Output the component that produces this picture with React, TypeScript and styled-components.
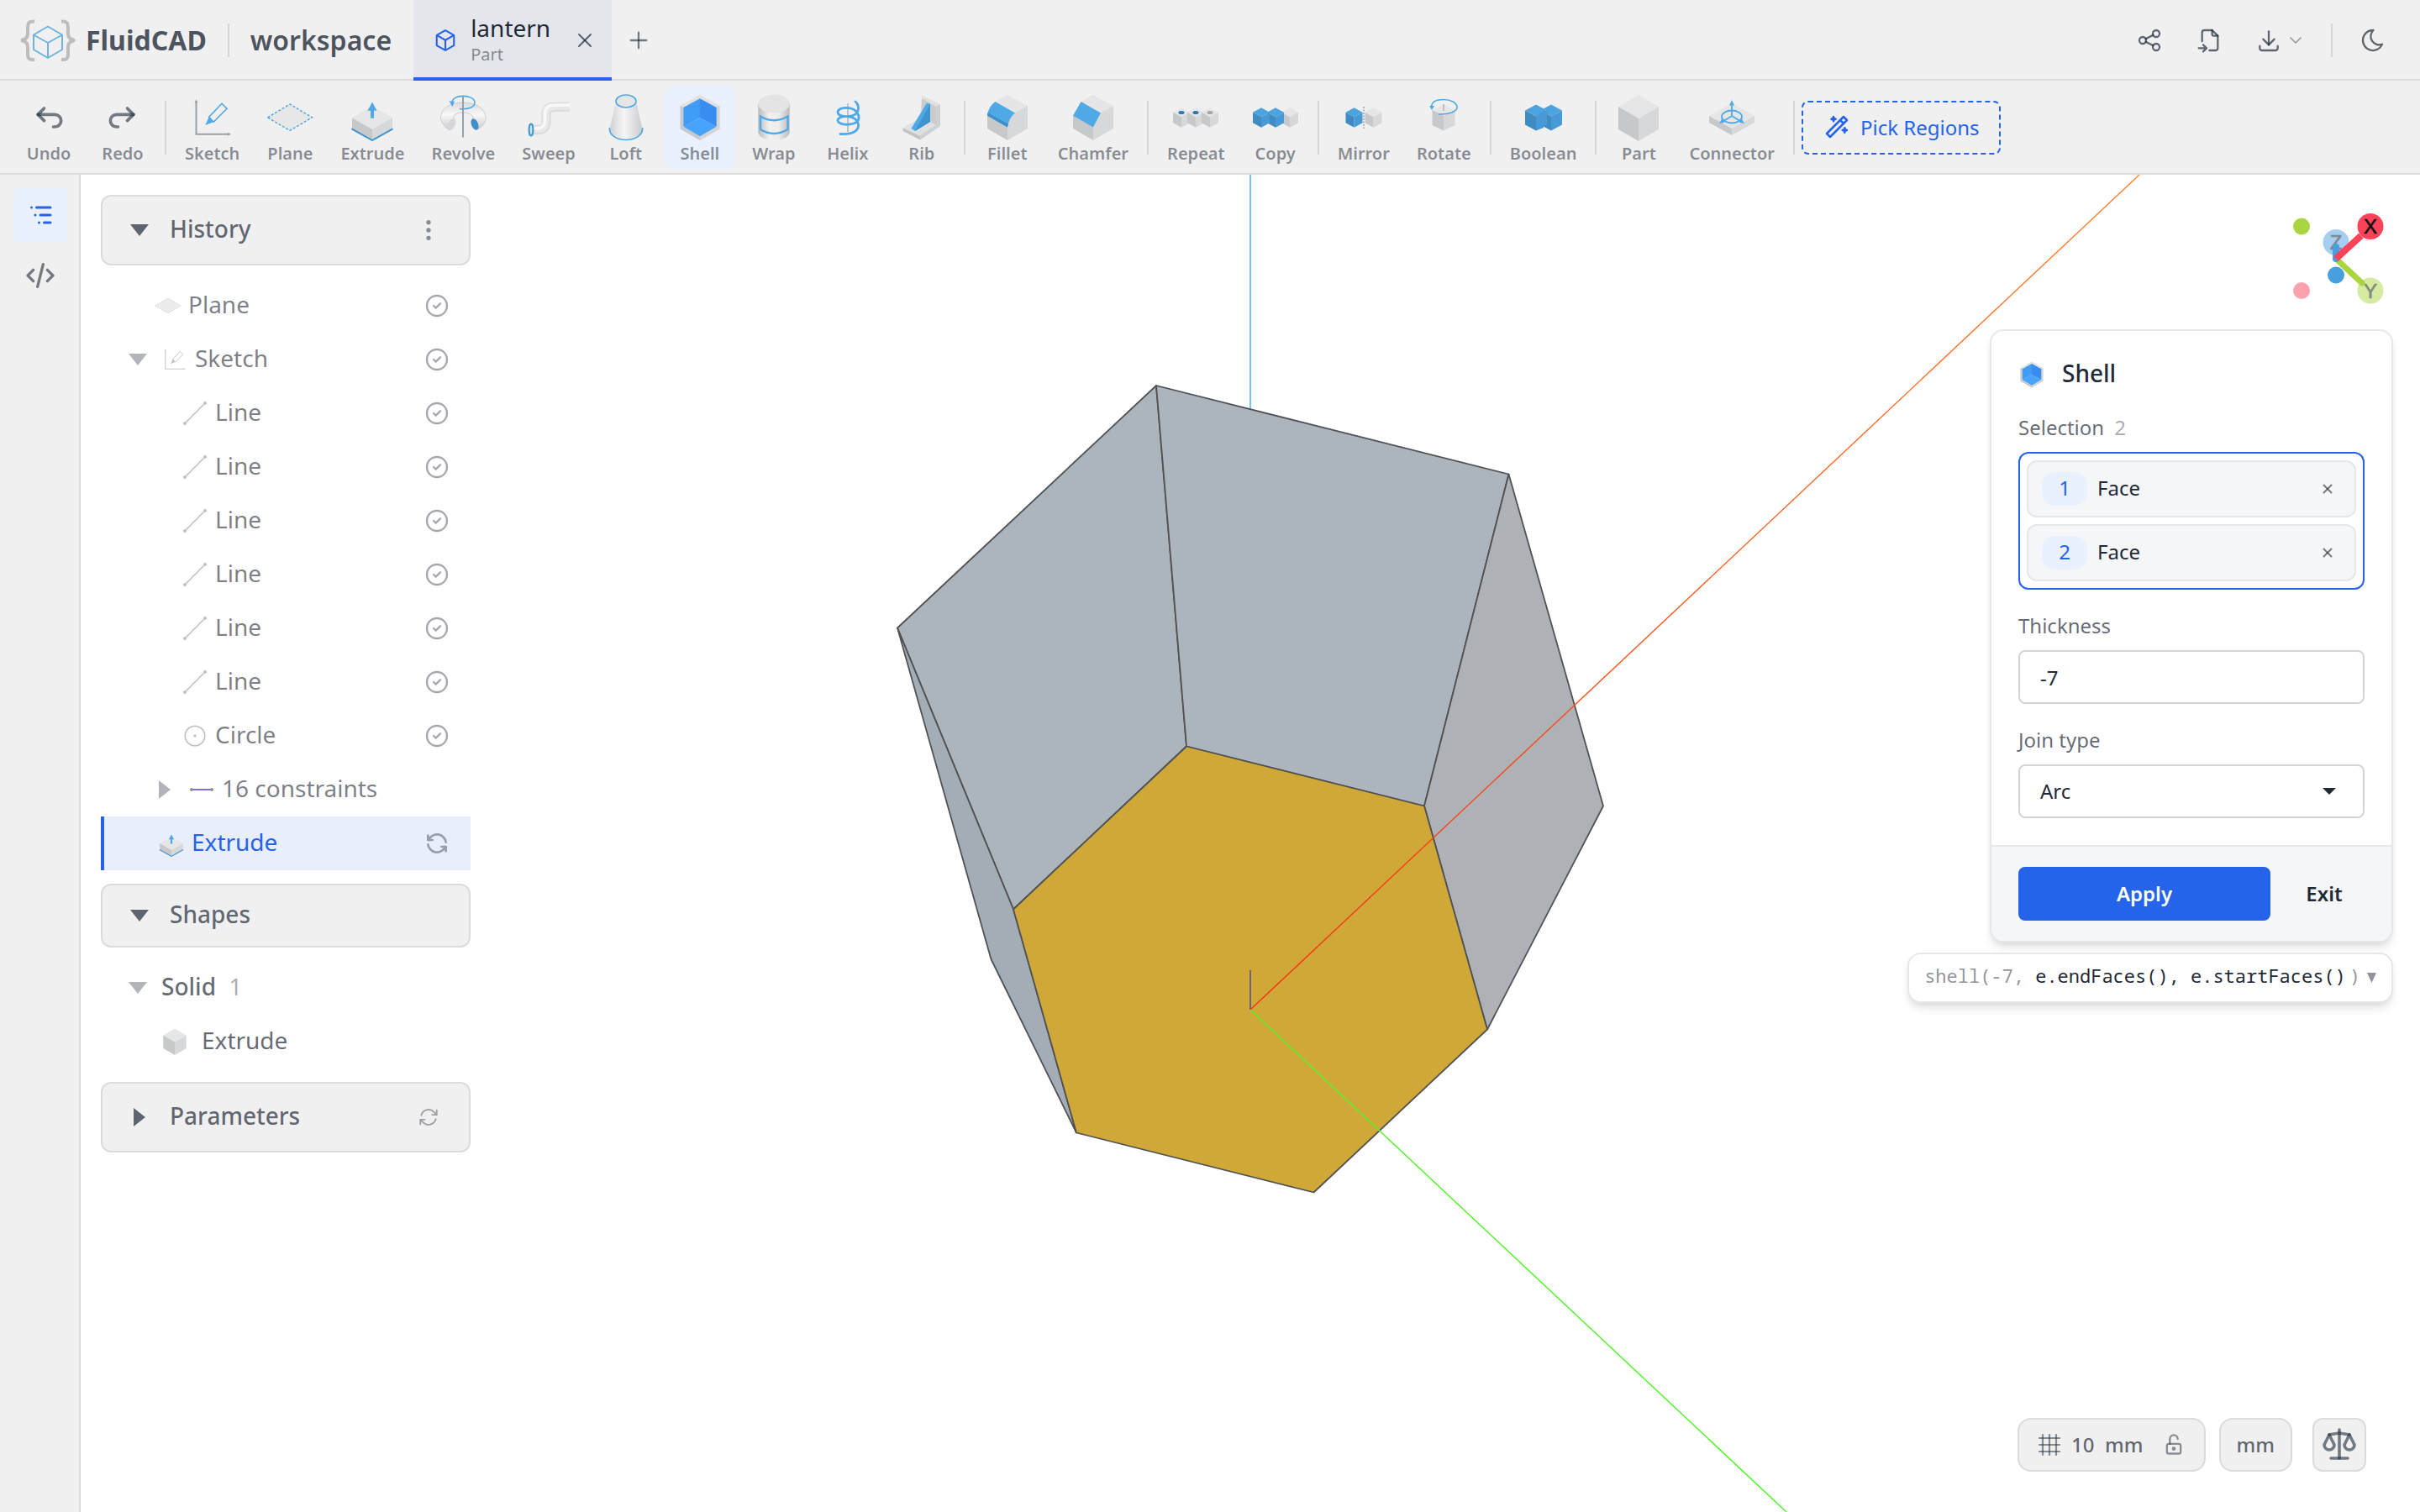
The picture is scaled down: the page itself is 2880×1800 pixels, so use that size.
import React from 'react';
import styled, { createGlobalStyle } from 'styled-components';
import {
  TbArrowBackUp,
  TbArrowForwardUp,
  TbChevronDown,
  TbCircleCheck,
  TbCode,
  TbDotsVertical,
  TbDownload,
  TbFileImport,
  TbListTree,
  TbLockOpen,
  TbMoon,
  TbPlus,
  TbRefresh,
  TbScale,
  TbShare,
  TbWand,
  TbX,
} from 'react-icons/tb';

const color = {
  chrome: '#f0f0f0',
  line: '#dbdbdb',
  accent: '#2563eb',
  accentSoft: '#e9f0fe',
  ink: '#1f2937',
  strong: 'rgba(31, 41, 55, 0.8)',
  medium: 'rgba(31, 41, 55, 0.7)',
  soft: 'rgba(31, 41, 55, 0.6)',
  faint: 'rgba(31, 41, 55, 0.5)',
  ghost: 'rgba(31, 41, 55, 0.4)',
  panelLine: '#e5e7eb',
  panelSoft: '#f5f6f8',
  steel: '#9aa0a9',
  blue: '#4fa9e6',
};

const GlobalStyle = createGlobalStyle`
  *, *::before, *::after { box-sizing: border-box; }
  body {
    margin: 0;
    background: #fff;
    color: ${color.ink};
    font-family: 'Noto Sans', 'Open Sans', sans-serif;
    font-size: 24px;
  }
  button, input, select { font: inherit; color: inherit; margin: 0; }
  button { padding: 0; border: 0; background: none; cursor: pointer; }
  svg { display: block; flex: none; }
`;

/* ---------- shell of the page ---------- */

const Page = styled.div`
  display: flex;
  flex-direction: column;
  min-height: 100vh;
`;

const Header = styled.header`
  display: flex;
  align-items: stretch;
  height: 96px;
  padding: 0 24px;
  background: ${color.chrome};
  box-shadow: inset 0 -2px ${color.line};
`;

const Group = styled.div<{ $gap: number }>`
  display: flex;
  align-items: center;
  gap: ${(p) => p.$gap}px;
`;

const Brand = styled.h1`
  margin: 0;
  font-size: 32px;
  font-weight: 700;
  line-height: 48px;
  color: ${color.strong};
`;

const Workspace = styled(Brand).attrs({ as: 'span' })`
  font-weight: 600;
`;

const Rule = styled.span<{ $height: number; $margin: number }>`
  flex: none;
  width: 2px;
  height: ${(p) => p.$height}px;
  margin: 0 ${(p) => p.$margin}px;
  background: #d6d6d6;
`;

const FileTab = styled.div`
  display: flex;
  align-items: center;
  gap: 16px;
  width: 236px;
  margin-left: 26px;
  padding: 0 18px 0 24px;
  background: #e4e6eb;
  box-shadow: inset 0 -4px ${color.accent};
  color: ${color.accent};
`;

const FileName = styled.span`
  display: flex;
  flex: 1;
  flex-direction: column;
  gap: 2px;
  font-size: 28px;
  line-height: 32px;
  color: ${color.ink};

  small {
    font-size: 20px;
    line-height: 28px;
    color: ${color.faint};
  }
`;

const IconButton = styled.button<{ $w?: number; $h?: number; $tone?: string; $on?: boolean }>`
  display: flex;
  align-items: center;
  justify-content: center;
  gap: 4px;
  flex: none;
  width: ${(p) => p.$w ?? 64}px;
  height: ${(p) => p.$h ?? p.$w ?? 64}px;
  border-radius: 8px;
  color: ${(p) => p.$tone ?? color.medium};
  background: ${(p) => (p.$on ? color.accentSoft : 'none')};
`;

const HeaderActions = styled(Group)`
  margin-left: auto;
`;

const Toolbar = styled.nav`
  display: flex;
  align-items: center;
  gap: 4px;
  height: 112px;
  padding: 2px 16px 0;
  background: ${color.chrome};
  border-bottom: 2px solid ${color.line};
`;

const Tool = styled.button<{ $on?: boolean }>`
  display: flex;
  flex-direction: column;
  align-items: center;
  padding: 10px 14px 4px;
  border-radius: 12px;
  background: ${(p) => (p.$on ? color.accentSoft : 'none')};
  font-size: 20px;
  font-weight: 600;
  line-height: 30px;
  color: ${color.faint};
`;

const ToolGlyph = styled.span`
  display: flex;
  align-items: center;
  justify-content: center;
  width: 56px;
  height: 56px;
  color: ${color.soft};
`;

const PickButton = styled.button`
  display: flex;
  align-items: center;
  gap: 12px;
  height: 64px;
  padding: 0 24px 2px;
  border: 2px dashed ${color.accent};
  border-radius: 8px;
  font-size: 24px;
  color: ${color.accent};
`;

const Body = styled.div`
  display: flex;
  flex: 1;
`;

const Rail = styled.nav`
  display: flex;
  flex-direction: column;
  align-items: flex-start;
  gap: 8px;
  width: 96px;
  padding: 16px 14px 0 16px;
  background: ${color.chrome};
  border-right: 2px solid ${color.line};
`;

const Viewport = styled.main`
  position: relative;
  display: flex;
  flex: 1;
  justify-content: space-between;
  overflow: hidden;
`;

const Scene = styled.svg`
  position: absolute;
  inset: 0;
  width: 100%;
  height: 100%;
`;

/* ---------- history tree ---------- */

const Sidebar = styled.aside`
  position: relative;
  display: flex;
  flex-direction: column;
  gap: 16px;
  width: 440px;
  margin: 24px;
`;

const SectionHead = styled.div`
  display: flex;
  align-items: center;
  justify-content: space-between;
  padding: 16px 24px 16px 32px;
  border: 2px solid ${color.line};
  border-radius: 12px;
  background: ${color.chrome};
`;

const SectionToggle = styled.button`
  display: flex;
  align-items: center;
  gap: 24px;
  font-size: 28px;
  font-weight: 500;
  color: ${color.medium};
`;

const CaretBox = styled.span`
  display: flex;
  justify-content: center;
  width: 24px;
`;

const Label = styled.span`
  padding-bottom: 4px;
  line-height: 36px;
`;

const Tree = styled.ul`
  margin: 0;
  padding: 0;
  list-style: none;
`;

const TreeRow = styled.li<{ $indent: number; $on?: boolean; $gap?: number }>`
  display: flex;
  align-items: center;
  gap: ${(p) => p.$gap ?? 8}px;
  height: 64px;
  padding: 0 24px 0 ${(p) => p.$indent}px;
  border-left: ${(p) => (p.$on ? `4px solid ${color.accent}` : '0')};
  background: ${(p) => (p.$on ? '#e8eefc' : 'none')};
  font-size: 28px;
  color: ${(p) => (p.$on ? color.accent : color.soft)};
`;

const TreeLabel = styled(Label)<{ $tone?: string; $weight?: number }>`
  color: ${(p) => p.$tone ?? 'inherit'};
  font-weight: ${(p) => p.$weight ?? 400};
`;

const TreeToggle = styled.button`
  display: flex;
  align-items: center;
  justify-content: center;
  width: 32px;
  height: 32px;
  margin-right: 4px;
  color: rgba(31, 41, 55, 0.35);
`;

const RowState = styled.span`
  margin-left: auto;
  color: ${color.ghost};
`;

/* ---------- right column ---------- */

const RightColumn = styled.div`
  position: relative;
  display: flex;
  flex-direction: column;
  align-items: flex-end;
  padding: 36px 32px 48px 0;
`;

const Card = styled.form`
  width: 480px;
  margin-top: 20px;
  border: 2px solid ${color.panelLine};
  border-radius: 16px;
  background: #fff;
  box-shadow: 0 8px 12px -2px rgba(0, 0, 0, 0.1), 0 4px 8px -4px rgba(0, 0, 0, 0.1);
  overflow: hidden;
`;

const CardBody = styled.div`
  padding: 32px;
`;

const CardTitle = styled.h2`
  display: flex;
  align-items: center;
  gap: 20px;
  margin: 0;
  font-size: 28px;
  font-weight: 500;
`;

const FieldLabel = styled.label`
  display: flex;
  gap: 12px;
  margin: 27px 0 13px;
  font-size: 24px;
  line-height: 32px;
  color: ${color.medium};

  span { color: ${color.ghost}; }
`;

const SelectionLabel = styled(FieldLabel).attrs({ as: 'h3' })`
  font-weight: 400;
`;

const PickList = styled.ul`
  display: flex;
  flex-direction: column;
  gap: 8px;
  margin: 0;
  padding: 8px;
  border: 2px solid ${color.accent};
  border-radius: 12px;
  list-style: none;
`;

const PickItem = styled.li`
  display: flex;
  align-items: center;
  gap: 12px;
  height: 68px;
  padding: 0 12px 0 16px;
  border: 2px solid ${color.panelLine};
  border-radius: 12px;
  background: ${color.panelSoft};
  line-height: 38px;

  span { padding-bottom: 2px; }
  button { margin-left: auto; }
`;

const Badge = styled.span`
  width: 54px;
  border-radius: 16px;
  background: ${color.accentSoft};
  text-align: center;
  color: ${color.accent};
`;

const Field = styled.input`
  display: block;
  width: 100%;
  height: 64px;
  padding: 0 24px;
  border: 2px solid #d2d3d5;
  border-radius: 8px;
  background: #fff;
`;

const SelectBox = styled.div`
  display: grid;
  align-items: center;

  > * { grid-area: 1 / 1; }
  > svg { justify-self: end; margin-right: 34px; pointer-events: none; }
`;

const Select = styled(Field).attrs({ as: 'select' })`
  padding-bottom: 2px;
  appearance: none;
`;

const CardFooter = styled.footer`
  display: flex;
  gap: 16px;
  padding: 24px 32px;
  border-top: 2px solid ${color.panelLine};
  background: ${color.panelSoft};
`;

const ActionButton = styled.button<{ $primary?: boolean }>`
  flex: ${(p) => (p.$primary ? '1' : '0 0 96px')};
  height: 64px;
  padding-bottom: 2px;
  border-radius: 8px;
  background: ${(p) => (p.$primary ? color.accent : 'none')};
  font-weight: 600;
  color: ${(p) => (p.$primary ? '#fff' : color.ink)};
`;

const CodePreview = styled.button`
  display: flex;
  align-items: center;
  gap: 4px;
  height: 60px;
  margin-top: 12px;
  padding: 0 18px 0 18px;
  border: 2px solid ${color.panelLine};
  border-radius: 16px;
  background: #fff;
  box-shadow: 0 8px 12px -2px rgba(0, 0, 0, 0.1), 0 4px 8px -4px rgba(0, 0, 0, 0.1);

  code {
    padding-bottom: 6px;
    font-family: 'Noto Sans Mono', 'DejaVu Sans Mono', monospace;
    font-size: 22px;
    white-space: pre;
    color: ${color.faint};
  }
  b { font-weight: 400; color: ${color.ink}; }
  svg { margin-left: 4px; color: ${color.faint}; }
`;

const StatusBar = styled.div`
  display: flex;
  align-items: center;
  gap: 16px;
  margin: auto 32px 0 0;
  color: ${color.medium};
`;

const Pill = styled.div`
  display: flex;
  align-items: center;
  gap: 12px;
  height: 64px;
  padding: 0 22px;
  border: 2px solid ${color.line};
  border-radius: 16px;
  background: ${color.chrome};
  font-weight: 500;
`;

const GridSize = styled.input`
  width: 28px;
  padding: 0 0 2px;
  border: 0;
  background: none;
`;

const Unit = styled.span`
  padding-bottom: 2px;
`;

const LockButton = styled(IconButton)`
  margin-left: 10px;
`;

const PillButton = styled(Pill).attrs({ as: 'button' })`
  padding: 0 19px;
`;

const ScaleButton = styled(Pill).attrs({ as: 'button' })`
  justify-content: center;
  width: 64px;
  margin-left: 8px;
  padding: 0;
  border-radius: 12px;
  color: ${color.soft};
`;

/* ---------- drawings ---------- */

const Art = ({ size = 56, children }: { size?: number; children: React.ReactNode }) => (
  <svg width={size} height={size} viewBox="0 0 56 56" fill="none" aria-hidden="true">
    {children}
  </svg>
);

const grey = ['#e6e6e7', '#c6c8ca', '#d7d8da'];
const azure = ['#4ba3df', '#3f8cc2', '#479ad6'];

type CubeProps = { cx?: number; top?: number; hw?: number; rise?: number; side?: number; tones?: string[] };

const Cube = ({ cx = 28, top = 1, hw = 24, rise = 14, side = 27, tones = grey }: CubeProps) => {
  const l = cx - hw;
  const r = cx + hw;
  const s = top + rise;
  const m = s + rise;
  return (
    <g>
      <path d={`M${cx} ${top}L${r} ${s}L${cx} ${m}L${l} ${s}Z`} fill={tones[0]} />
      <path d={`M${l} ${s}L${cx} ${m}V${m + side}L${l} ${s + side}Z`} fill={tones[1]} />
      <path d={`M${r} ${s}L${cx} ${m}V${m + side}L${r} ${s + side}Z`} fill={tones[2]} />
    </g>
  );
};

const SketchArt = ({ muted }: { muted?: boolean }) => {
  const pen = muted ? '#c4c4c4' : color.blue;
  const axis = muted ? '#c9c9c9' : color.steel;
  return (
    <>
      <path d="M8.5 8V47.7H48" stroke={axis} strokeWidth="2" />
      <path d="M8.5 6.5l2 4h-4zM50 47.7l-4-2v4z" fill={axis} />
      <path d="M39 11.3l6 6L29 33.3l-5.3-6z" stroke={pen} strokeWidth="1.6" />
      <path d="M19.3 37l4.4-9.7 5.3 6z" fill={pen} />
    </>
  );
};

const PlaneArt = ({ muted }: { muted?: boolean }) => (
  <path
    d="M1.5 27.8L28 12l26.500 15.800L28 43.500Z"
    fill={muted ? '#ececec' : '#e7e7e7'}
    stroke={muted ? '#cfcfcf' : color.blue}
    strokeWidth="1.5"
    strokeDasharray="3 2"
  />
);

const ExtrudeArt = () => (
  <>
    <Cube top={14.500} rise={13.700} side={13} />
    <path d="M3.500 41.300L28 55l24.500-13.700" stroke="#3f93cf" strokeWidth="2" />
    <path d="M28 9.500l5.500 10.200H30v9h-4v-9h-3.500z" fill={color.blue} />
  </>
);

const RevolveArt = () => (
  <>
    <defs>
      <linearGradient id="ring" x1="0" y1="0" x2="0" y2="1">
        <stop offset="0" stopColor="#dcdcde" />
        <stop offset="0.450" stopColor="#f8f8f8" />
        <stop offset="1" stopColor="#c8cacc" />
      </linearGradient>
    </defs>
    <path
      d="M12.500 43C4 39 1.500 31 1.500 28C2 16 14 10 28 10S54 16 55.300 28C55.300 33 52 39 45 42L38 32C42 29 40 22 28 22S15 28 19 33Z"
      fill="url(#ring)"
      stroke="#cbccce"
      strokeWidth="1"
    />
    <ellipse cx="14.600" cy="36" rx="4" ry="7" transform="rotate(22 14.600 36)" fill="#d5d6d8" />
    <ellipse cx="42" cy="36" rx="4" ry="7" transform="rotate(-22 42 36)" fill="#3f8fcb" />
    <path d="M28 3v48.500" stroke={color.steel} strokeWidth="2" />
    <path d="M15 12C14 5 21 2.400 28 2.400S42 5 42 10.300S34 18.500 24 17.600" stroke={color.blue} strokeWidth="1.600" />
    <path d="M11.500 8.500l6.500 0-2.500 6.500z" fill={color.blue} />
  </>
);

const SweepArt = () => (
  <>
    <path d="M7 42.500H15Q25 42.500 25 33V25Q25 15.500 34 15.500L53 15" stroke="#dcdcde" strokeWidth="11.500" />
    <path d="M7 42H15Q24.500 42 24.500 32.500V24.500Q24.500 15 33.500 15L53 14.500" stroke="#e8e8e9" strokeWidth="8" />
    <path d="M7 41H14Q23.500 41 23.500 32V24Q23.500 13.500 33 13.500L53 13" stroke="#f8f8f8" strokeWidth="3.500" />
    <ellipse cx="7" cy="42.500" rx="2.400" ry="7" fill="#cfe4f3" stroke="#3f93cf" strokeWidth="2" />
  </>
);

const LoftArt = () => (
  <>
    <defs>
      <linearGradient id="cone">
        <stop offset="0" stopColor="#cfd0d2" />
        <stop offset="0.450" stopColor="#f6f6f6" />
        <stop offset="1" stopColor="#c9cacc" />
      </linearGradient>
    </defs>
    <path d="M16 8.500L8.500 42C9 50 18 54.500 28 54.500S47 50 47.500 42L40 8.500Z" fill="url(#cone)" />
    <ellipse cx="28" cy="8.500" rx="12" ry="7.500" fill="#e6e6e7" stroke={color.blue} strokeWidth="1.600" />
    <path d="M8.500 40C7.500 49 17 54.500 28 54.500S48.500 49 47.500 40" stroke={color.blue} strokeWidth="1.600" />
  </>
);

const ShellArt = () => (
  <>
    <path d="M28 .7L51.500 14v27.500L28 55 4.500 41.500V14z" fill="#e1e1e1" />
    <path d="M4.500 14v27.500L28 55v-5L8 38.700V15.500z" fill="#c9cacc" />
    <path d="M51.500 14v27.500L28 55v-5l20-11.300V15.500z" fill="#d3d4d6" />
    <path d="M28 5.300v23.200L8.300 38.700V16z" fill="#409cf5" />
    <path d="M28 5.300v23.200l19.700 10.200V16z" fill="#3a8df0" />
    <path d="M28 28.500l19.700 10.200L28 50.300 8.300 38.700z" fill="#47a3fb" />
  </>
);

const WrapArt = () => (
  <>
    <defs>
      <linearGradient id="can">
        <stop offset="0" stopColor="#b9babc" />
        <stop offset="0.350" stopColor="#f1f1f1" />
        <stop offset="0.650" stopColor="#ededee" />
        <stop offset="1" stopColor="#b9babc" />
      </linearGradient>
    </defs>
    <path d="M9.300 11V46C11 52 19 55 28 55S45 52 46.700 46V11Z" fill="url(#can)" />
    <ellipse cx="28" cy="11.500" rx="18.700" ry="11" fill="#e4e4e5" />
    <path d="M12 26.500Q28 36 44.500 26.500V42Q28 52 12 42Z" stroke={color.blue} strokeWidth="2.400" />
  </>
);

const HelixArt = () => (
  <>
    <path d="M28 11v34" stroke="#b5b7ba" strokeWidth="1.600" />
    <path
      d="M37 9C41 12 42 19 38 23C33 28 16 28 16 21.500S34 14 39 22C43 28 41 33 35 35C27 37.500 16 36 16 31S33 24 39 32C43 39 40 48.500 19 47.500"
      stroke={color.blue}
      strokeWidth="2.800"
      strokeLinecap="round"
    />
  </>
);

const RibArt = () => (
  <>
    <path d="M28 1.300L50 12.300V38L26 54.500 5.500 40.500 26 28z" fill="#dfe0e1" />
    <path d="M45 15l5-2.700V38L26 54.500V49l19-12z" fill="#cfd0d2" />
    <path d="M5.500 40.500L26 50v4.500L5.500 44z" fill="#c1c3c5" />
    <path d="M28 5l17 10v22L28 27z" fill="#c9cbcd" />
    <path d="M34 10.500l4 1.500v21L20 44l-4.500-3z" fill={color.blue} />
    <path d="M38 12v21L20 44z" fill="#3f93cf" />
  </>
);

const Block = ({ round }: { round?: boolean }) => (
  <>
    <path d="M28 1L52 14 37 23 13.500 9z" fill="#e5e5e6" />
    <path d={round ? 'M37 22.500L52 14v27L28 55V39Q30 28 37 22.500Z' : 'M37 22.500L52 14v27L28 55V39.500Z'} fill="#d7d8da" />
    <path d="M4 25.700l24 13.500V55L4 41z" fill="#c6c8ca" />
    <path
      d={round ? 'M13.500 9L37 22.500Q30 28 28 39.500L4 25.700Q5 15 13.500 9Z' : 'M13.500 9L37 22.500 28 39.500 4 25.700Z'}
      fill={color.blue}
    />
    {round && <path d="M4.300 22L28.700 35.500 28 39.500 4 25.700z" fill="#3f8fcb" />}
  </>
);

const small = { hw: 10, rise: 5.500, side: 12.500, top: 16.300 };

const RepeatArt = () => (
  <>
    {[11, 28, 45].map((x, i) => (
      <g key={x}>
        <Cube cx={x} {...small} />
        <ellipse cx={x} cy="22" rx="3.600" ry="2" fill={i < 2 ? '#2f77ad' : '#a3a5a8'} />
      </g>
    ))}
  </>
);

const CopyArt = () => (
  <>
    <Cube cx={45} {...small} />
    <Cube cx={28} {...small} tones={azure} />
    <Cube cx={11} {...small} tones={azure} />
  </>
);

const MirrorArt = () => (
  <>
    <Cube cx={16.500} {...small} tones={azure} />
    <Cube cx={39.500} {...small} />
    <path d="M28 15v26" stroke="#b5b7ba" strokeWidth="2" strokeDasharray="2 1.500" />
  </>
);

const RotateArt = () => (
  <>
    <Cube top={12.500} hw={13.500} rise={6.500} side={18} />
    <path d="M28 12v8" stroke="#b5b7ba" strokeWidth="1.600" />
    <path d="M13.500 15C14 9 20 6.500 28 6.500S44 10 44 15.500S34 24.500 22 24" stroke={color.blue} strokeWidth="1.600" />
    <path d="M11 14h6l-3 5z" fill={color.blue} />
  </>
);

const BooleanArt = () => (
  <>
    <Cube cx={37} top={12.500} hw={13} rise={7} side={17} tones={azure} />
    <Cube cx={19} top={12.500} hw={13} rise={7} side={17} tones={azure} />
    <path d="M19 26.500L28 20l4 3-4 3v14l-9 3.500z" fill="#479ad6" />
  </>
);

const ConnectorArt = () => (
  <>
    <Cube top={11} hw={27} rise={15} side={8} />
    <g stroke={color.blue} strokeWidth="1.800">
      <ellipse cx="28" cy="27" rx="12" ry="7.500" />
      <path d="M28 26V10M28 26L16 33.500M28 26L40 33.500" />
    </g>
    <path d="M28 7l3 6.500h-6zM13 35l3-5.500 3 4.500zM43 35l-3-5.500-3 4.500z" fill={color.blue} />
  </>
);

const Caret = ({ right, w = 22, h = 14 }: { right?: boolean; w?: number; h?: number }) =>
  right ? (
    <svg width={h} height={w} viewBox="0 0 14 22" fill="currentColor" aria-hidden="true">
      <path d="M0 0l14 11L0 22z" />
    </svg>
  ) : (
    <svg width={w} height={h} viewBox="0 0 22 14" preserveAspectRatio="none" fill="currentColor" aria-hidden="true">
      <path d="M0 0h22L11 14z" />
    </svg>
  );

const Logo = () => (
  <svg width="66" height="50" viewBox="0 0 66 50" fill="none" aria-hidden="true">
    <g stroke="#bdbdbd" strokeWidth="4">
      <path d="M17 2.500C10 2 9 5 9 9.500V17Q9 24 1 25Q9 26 9 33v8C9 46 10 48.500 17 48" />
      <path d="M49 2.500C56 2 57 5 57 9.500V17Q57 24 65 25Q57 26 57 33v8C57 46 56 48.500 49 48" />
    </g>
    <path
      d="M33 8.500L50 18.500V36L33 46 16 36V18.500ZM16 18.500L33 28 50 18.500M33 28V46"
      stroke="#6fb3e2"
      strokeWidth="2"
      strokeLinejoin="round"
    />
  </svg>
);

const PartIcon = () => (
  <svg width="28" height="28" viewBox="0 0 24 24" fill="none" stroke="currentColor" strokeWidth="1.800" strokeLinejoin="round" aria-hidden="true">
    <path d="M12 1.800l8.800 5v10.400l-8.800 5-8.800-5V6.800zM3.200 6.800l8.800 5 8.800-5M12 11.800v10.400" />
  </svg>
);

const ReloadIcon = () => (
  <svg width="26" height="26" viewBox="0 0 24 24" fill="none" stroke="currentColor" strokeWidth="1.700" strokeLinecap="round" strokeLinejoin="round" aria-hidden="true">
    <path d="M16.023 9.348h4.992v-.001M2.985 19.644v-4.992m0 0h4.992m-4.993 0 3.181 3.183a8.250 8.250 0 0 0 13.803-3.700M4.031 9.865a8.250 8.250 0 0 1 13.803-3.700l3.181 3.182m0-4.991v4.990" />
  </svg>
);

const GridIcon = () => (
  <svg width="28" height="28" viewBox="0 0 28 28" stroke={color.faint} strokeWidth="2.200" strokeLinecap="round" aria-hidden="true">
    <path d="M6 2v24M14 2v24M22 2v24" />
    <path d="M2 6h24M2 14h24M2 22h24" />
  </svg>
);

const lineArt = (
  <>
    <path d="M7 49L49 7" stroke="#c2c2c2" strokeWidth="3" />
    <circle cx="7" cy="49" r="3.500" fill="#c2c2c2" />
    <circle cx="49" cy="7" r="3.500" fill="#c2c2c2" />
  </>
);

const circleArt = (
  <>
    <circle cx="28" cy="28" r="20.500" stroke="#c2c2c2" strokeWidth="3" />
    <circle cx="28" cy="28" r="3" fill="#c2c2c2" />
  </>
);

const constraintArt = (
  <>
    <path d="M6 28H50" stroke="#7a6fd6" strokeWidth="3.500" />
    <circle cx="7" cy="28" r="3.500" fill="#8f8f8f" />
    <circle cx="49" cy="28" r="3.500" fill="#8f8f8f" />
  </>
);

const Model = () => (
  <Scene viewBox="96 208 2784 1592" preserveAspectRatio="xMidYMid slice" role="img" aria-label="3D model">
    <path d="M1488 208V487" stroke="#7cc0f5" strokeWidth="2" />
    <g stroke="#505254" strokeWidth="1.800" strokeLinejoin="round">
      <path d="M1376 459L1412 888.500L1206 1082.500L1068 747.500Z" fill="#acb4bc" />
      <path d="M1376 459L1795.500 564.500L1695 959.500L1412 888.500Z" fill="#acb4bc" />
      <path d="M1795.500 564.500L1908 959.500L1770 1225.500L1695 959.500Z" fill="#aeb1b6" />
      <path d="M1068 747.500L1206 1082.500L1281 1348.500L1179.500 1142Z" fill="#a2adb6" />
      <path d="M1412 888.500L1695 959.500L1770 1225.500L1563.500 1419.500L1281 1348.500L1206 1082.500Z" fill="#cfa838" />
    </g>
    <defs>
      <linearGradient id="axis-x" gradientUnits="userSpaceOnUse" x1="1488" y1="1202" x2="2546" y2="208">
        <stop offset="0" stopColor="#f8300c" />
        <stop offset="1" stopColor="#f98532" />
      </linearGradient>
    </defs>
    <path d="M1488 1202V1155" stroke="#6d6674" strokeWidth="2" />
    <path d="M1488 1202L2546 208" stroke="url(#axis-x)" strokeWidth="1.400" />
    <path d="M1488 1202L2126 1800" stroke="#55f42a" strokeWidth="1.500" />
  </Scene>
);

const Gizmo = () => (
  <svg width="136" height="128" viewBox="0 0 136 128" role="img" aria-label="View orientation">
    <circle cx="27" cy="25.500" r="10" fill="#aad541" />
    <circle cx="27" cy="102" r="10" fill="#fda2ad" />
    <circle cx="68" cy="83.500" r="10" fill="#489fe0" />
    <circle cx="68" cy="44.500" r="15.500" fill="#a5cff0" />
    <circle cx="109" cy="102" r="15.500" fill="#d6eaa2" />
    <circle cx="109" cy="25.500" r="15.500" fill="#fa4359" />
    <g fontFamily="'Liberation Sans', Arial, sans-serif" fontSize="24" textAnchor="middle">
      <text x="68" y="53" fill="#7f8890" stroke="#7f8890" strokeWidth="0.600">Z</text>
      <text x="109" y="34" fill="#111" stroke="#111" strokeWidth="0.600">X</text>
      <text x="109" y="111" fill="#858b7c" stroke="#858b7c" strokeWidth="0.600">Y</text>
    </g>
    <path d="M68 64L99 93" stroke="#aad541" strokeWidth="7" strokeLinecap="round" />
    <path d="M68 64V50" stroke="#489fe0" strokeWidth="8" strokeLinecap="round" />
    <path d="M68 64L98 36.500" stroke="#fa4359" strokeWidth="8" />
  </svg>
);

/* ---------- data ---------- */

type ToolSpec = { name: string; art: React.ReactNode; on?: boolean };

const toolGroups: ToolSpec[][] = [
  [
    { name: 'Sketch', art: <SketchArt /> },
    { name: 'Plane', art: <PlaneArt /> },
    { name: 'Extrude', art: <ExtrudeArt /> },
    { name: 'Revolve', art: <RevolveArt /> },
    { name: 'Sweep', art: <SweepArt /> },
    { name: 'Loft', art: <LoftArt /> },
    { name: 'Shell', art: <ShellArt />, on: true },
    { name: 'Wrap', art: <WrapArt /> },
    { name: 'Helix', art: <HelixArt /> },
    { name: 'Rib', art: <RibArt /> },
  ],
  [
    { name: 'Fillet', art: <Block round /> },
    { name: 'Chamfer', art: <Block /> },
  ],
  [
    { name: 'Repeat', art: <RepeatArt /> },
    { name: 'Copy', art: <CopyArt /> },
  ],
  [
    { name: 'Mirror', art: <MirrorArt /> },
    { name: 'Rotate', art: <RotateArt /> },
  ],
  [{ name: 'Boolean', art: <BooleanArt /> }],
  [
    { name: 'Part', art: <Cube /> },
    { name: 'Connector', art: <ConnectorArt /> },
  ],
];

type Row = { label: string; indent: number; art: React.ReactNode; caret?: 'down' | 'right'; state?: 'ok' | 'stale' };

const line: Row = { label: 'Line', indent: 96, art: lineArt, state: 'ok' };

const history: Row[] = [
  { label: 'Plane', indent: 64, art: <PlaneArt muted />, state: 'ok' },
  { label: 'Sketch', indent: 28, art: <SketchArt muted />, caret: 'down', state: 'ok' },
  line,
  line,
  line,
  line,
  line,
  line,
  { label: 'Circle', indent: 96, art: circleArt, state: 'ok' },
  { label: '16 constraints', indent: 60, art: constraintArt, caret: 'right' },
  { label: 'Extrude', indent: 64, art: <ExtrudeArt />, state: 'stale' },
];

const Divider = () => <Rule $height={64} $margin={4} />;

export default function App() {
  return (
    <>
      <GlobalStyle />
      <Page>
        <Header>
          <Group $gap={12}>
            <Logo />
            <Brand>FluidCAD</Brand>
            <Rule $height={40} $margin={13} />
            <Workspace>workspace</Workspace>
          </Group>
          <FileTab>
            <PartIcon />
            <FileName>
              lantern
              <small>Part</small>
            </FileName>
            <IconButton $w={28} aria-label="Close tab">
              <TbX size={28} strokeWidth={1.7} />
            </IconButton>
          </FileTab>
          <Group $gap={8}>
            <IconButton aria-label="New tab" $tone={color.soft}>
              <TbPlus size={32} strokeWidth={1.7} />
            </IconButton>
          </Group>
          <HeaderActions $gap={8}>
            <IconButton aria-label="Share"><TbShare size={32} strokeWidth={1.7} /></IconButton>
            <IconButton aria-label="Import"><TbFileImport size={32} strokeWidth={1.7} /></IconButton>
            <IconButton $w={88} $h={64} aria-label="Download">
              <TbDownload size={32} strokeWidth={1.7} />
              <TbChevronDown size={24} strokeWidth={1.7} opacity={0.6} />
            </IconButton>
            <Rule $height={40} $margin={8} />
            <IconButton aria-label="Dark mode"><TbMoon size={32} strokeWidth={1.7} /></IconButton>
          </HeaderActions>
        </Header>

        <Toolbar>
          <Tool>
            <ToolGlyph><TbArrowBackUp size={44} strokeWidth={2} /></ToolGlyph>
            Undo
          </Tool>
          <Tool>
            <ToolGlyph><TbArrowForwardUp size={44} strokeWidth={2} /></ToolGlyph>
            Redo
          </Tool>
          {toolGroups.map((group) => (
            <React.Fragment key={group[0].name}>
              <Divider />
              {group.map((tool) => (
                <Tool key={tool.name} $on={tool.on}>
                  <Art>{tool.art}</Art>
                  {tool.name}
                </Tool>
              ))}
            </React.Fragment>
          ))}
          <Divider />
          <PickButton>
            <TbWand size={32} strokeWidth={1.9} />
            Pick Regions
          </PickButton>
        </Toolbar>

        <Body>
          <Rail>
            <IconButton $on $tone={color.accent} aria-label="Model tree"><TbListTree size={36} /></IconButton>
            <IconButton $tone={color.soft} aria-label="Code"><TbCode size={40} strokeWidth={2} /></IconButton>
          </Rail>

          <Viewport>
            <Model />

            <Sidebar>
              <SectionHead>
                <SectionToggle><CaretBox><Caret /></CaretBox><Label>History</Label></SectionToggle>
                <IconButton $w={48} $tone={color.faint} aria-label="History menu"><TbDotsVertical size={32} /></IconButton>
              </SectionHead>
              <Tree>
                {history.map((row, i) => (
                  <TreeRow key={i} $indent={row.indent} $on={row.state === 'stale'}>
                    {row.caret && (
                      <TreeToggle aria-label={`Toggle ${row.label}`}><Caret right={row.caret === 'right'} /></TreeToggle>
                    )}
                    <Art size={32}>{row.art}</Art>
                    <TreeLabel>{row.label}</TreeLabel>
                    {row.state && (
                      <RowState>
                        {row.state === 'ok' ? <TbCircleCheck size={32} strokeWidth={1.8} /> : <TbRefresh size={32} strokeWidth={2} />}
                      </RowState>
                    )}
                  </TreeRow>
                ))}
              </Tree>
              <SectionHead>
                <SectionToggle><CaretBox><Caret /></CaretBox><Label>Shapes</Label></SectionToggle>
              </SectionHead>
              <Tree>
                <TreeRow $indent={28}>
                  <TreeToggle aria-label="Toggle Solid"><Caret /></TreeToggle>
                  <TreeLabel $tone={color.medium} $weight={500}>Solid</TreeLabel>
                  <TreeLabel $tone={color.ghost}>&nbsp;1</TreeLabel>
                </TreeRow>
                <TreeRow $indent={72} $gap={16}>
                  <Art size={32}><Cube /></Art>
                  <TreeLabel $tone={color.medium}>Extrude</TreeLabel>
                </TreeRow>
              </Tree>
              <SectionHead>
                <SectionToggle><CaretBox><Caret right /></CaretBox><Label>Parameters</Label></SectionToggle>
                <IconButton $w={48} $tone={color.ghost} aria-label="Reload parameters"><ReloadIcon /></IconButton>
              </SectionHead>
            </Sidebar>

            <RightColumn>
              <Gizmo />
              <Card onSubmit={(e) => e.preventDefault()}>
                <CardBody>
                  <CardTitle><Art size={32}><ShellArt /></Art><Label>Shell</Label></CardTitle>
                  <SelectionLabel>Selection <span>2</span></SelectionLabel>
                  <PickList>
                    {[1, 2].map((n) => (
                      <PickItem key={n}>
                        <Badge>{n}</Badge>
                        <span>Face</span>
                        <IconButton type="button" $w={40} $tone={color.soft} aria-label={`Remove face ${n}`}>
                          <TbX size={18} strokeWidth={2.6} />
                        </IconButton>
                      </PickItem>
                    ))}
                  </PickList>
                  <FieldLabel htmlFor="thickness">Thickness</FieldLabel>
                  <Field id="thickness" defaultValue="-7" />
                  <FieldLabel htmlFor="join">Join type</FieldLabel>
                  <SelectBox>
                    <Select id="join" defaultValue="Arc">
                      <option>Arc</option>
                      <option>Intersection</option>
                    </Select>
                    <Caret w={16} h={8} />
                  </SelectBox>
                </CardBody>
                <CardFooter>
                  <ActionButton $primary>Apply</ActionButton>
                  <ActionButton type="button">Exit</ActionButton>
                </CardFooter>
              </Card>
              <CodePreview>
                <code>shell(-7, <b>e.endFaces(), e.startFaces()</b></code>
                <code>)</code>
                <Caret w={11} h={12} />
              </CodePreview>
              <StatusBar>
                <Pill>
                  <GridIcon />
                  <GridSize defaultValue="10" aria-label="Grid size" />
                  <Unit>mm</Unit>
                  <LockButton $w={28} $tone={color.faint} aria-label="Unlock grid"><TbLockOpen size={28} /></LockButton>
                </Pill>
                <PillButton><Unit>mm</Unit></PillButton>
                <ScaleButton aria-label="Measure"><TbScale size={48} strokeWidth={1.8} /></ScaleButton>
              </StatusBar>
            </RightColumn>
          </Viewport>
        </Body>
      </Page>
    </>
  );
}
